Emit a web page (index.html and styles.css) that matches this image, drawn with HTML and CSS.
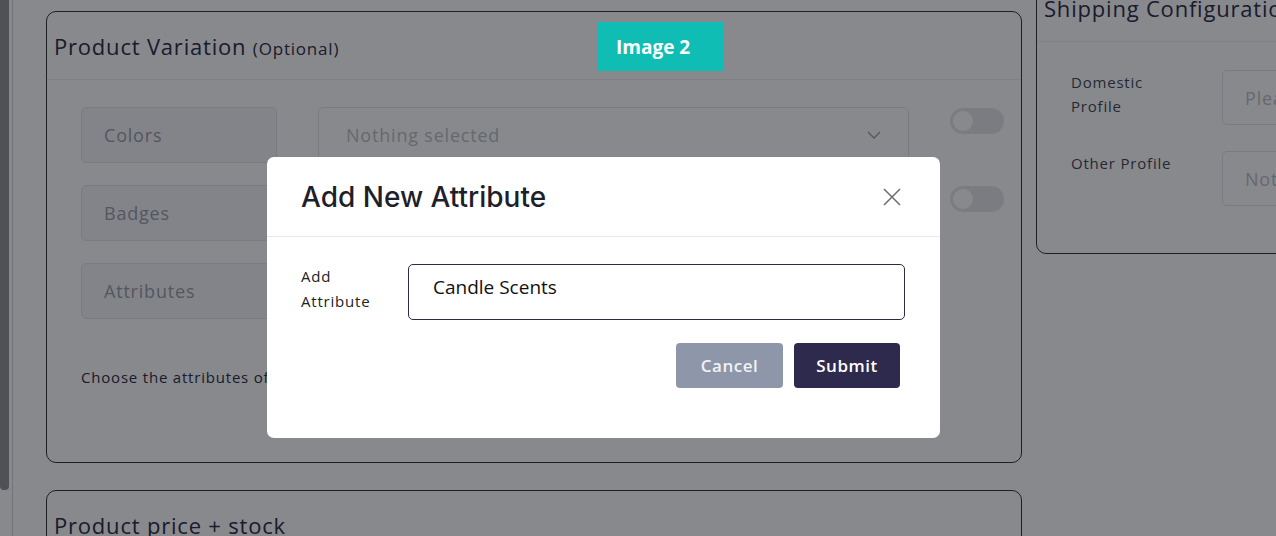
FILE: index.html
```html
<!DOCTYPE html>
<html lang="en">
<head>
  <meta charset="UTF-8">
  <meta name="viewport" content="width=device-width, initial-scale=1.0">
  <title>Add product</title>
  <link rel="stylesheet" href="styles.css">
</head>
<body>
  <div class="rail">
    <div class="thumb"></div>
  </div>

  <div class="page">
    <div class="main">
      <section class="card">
        <div class="card-head">
          <h2>Product Variation <small>(Optional)</small></h2>
        </div>
        <div class="card-body">
          <div class="attr-row">
            <div class="attr-name">Colors</div>
            <div class="attr-select">
              <span>Nothing selected</span>
              <svg width="14" height="8" viewBox="0 0 14 8"><path d="M1 1l6 6 6-6" fill="none" stroke="#9a9ca3" stroke-width="1.4"/></svg>
            </div>
            <span class="toggle"></span>
          </div>
          <div class="attr-row">
            <div class="attr-name">Badges</div>
            <div class="attr-select">
              <span>Nothing selected</span>
              <svg width="14" height="8" viewBox="0 0 14 8"><path d="M1 1l6 6 6-6" fill="none" stroke="#9a9ca3" stroke-width="1.4"/></svg>
            </div>
            <span class="toggle"></span>
          </div>
          <div class="attr-row">
            <div class="attr-name">Attributes</div>
            <div class="attr-select">
              <span>Nothing selected</span>
            </div>
          </div>
          <p class="hint">Choose the attributes of this product and then input values</p>
        </div>
      </section>

      <section class="card price">
        <div class="card-head">
          <h2>Product price + stock</h2>
        </div>
      </section>
    </div>

    <aside class="side">
      <section class="card">
        <div class="card-head">
          <h2>Shipping Configuration</h2>
        </div>
        <div class="card-body ship-body">
          <div class="ship-row">
            <label>Domestic Profile</label>
            <div class="ship-select">Please select</div>
          </div>
          <div class="ship-row">
            <label>Other Profile</label>
            <div class="ship-select">Nothing selected</div>
          </div>
        </div>
      </section>
    </aside>
  </div>

  <div class="backdrop"></div>

  <div class="modal">
    <div class="modal-head">
      <h3>Add New Attribute</h3>
      <svg class="close" width="18" height="18" viewBox="0 0 18 18"><path d="M1 1l16 16M17 1L1 17" stroke="#707070" stroke-width="1.6"/></svg>
    </div>
    <div class="modal-body">
      <div class="form-row">
        <label>Add Attribute</label>
        <div class="field">Candle Scents</div>
      </div>
      <div class="actions">
        <button class="btn cancel">Cancel</button>
        <button class="btn submit">Submit</button>
      </div>
    </div>
  </div>

  <div class="tag">Image 2</div>
</body>
</html>
```

FILE: styles.css
```css
*{
  margin: 0;
  padding: 0;
  box-sizing: border-box;
}
body{
  width: 1276px;
  height: 536px;
  overflow: hidden;
  display: flex;
  background: #fff;
  font-family: "Open Sans", sans-serif;
  letter-spacing: 0.05em;
  color: #2b2938;
}
.rail{
  width: 13px;
  flex: none;
  border-right: 1px solid #cfd5dc;
}
.thumb{
  width: 9px;
  height: 490px;
  background: #8c8e92;
  border-radius: 0 0 4px 4px;
}
.page{
  display: flex;
  gap: 14px;
  margin-top: -27px;
  padding-left: 33px;
}
.main{
  width: 976px;
  flex: none;
  padding-top: 38px;
}
.side{
  width: 320px;
  flex: none;
}
.card{
  border: 1px solid #2b2b2e;
  border-radius: 10px;
  background: #fff;
}
.card-head{
  height: 68px;
  padding-left: 7px;
  display: flex;
  align-items: center;
  border-bottom: 1px solid #eceef2;
}
.card-head h2{
  font-size: 22px;
  font-weight: 500;
  color: #25233a;
  white-space: nowrap;
}
.card-head small{
  font-size: 17px;
  font-weight: 400;
}
.card-body{
  padding: 27px 17px 73px 34px;
}
.attr-row{
  display: flex;
  align-items: flex-start;
  margin-bottom: 22px;
}
.attr-name{
  flex: none;
  width: 196px;
  height: 56px;
  padding-left: 22px;
  display: flex;
  align-items: center;
  background: #f4f5f7;
  border: 1px solid #e1e3e8;
  border-radius: 5px;
  font-size: 18px;
  color: #959aa2;
}
.attr-select{
  flex: none;
  width: 591px;
  height: 56px;
  margin-left: 41px;
  padding: 0 27px;
  display: flex;
  align-items: center;
  justify-content: space-between;
  border: 1px solid #e1e3e8;
  border-radius: 5px;
  font-size: 18px;
  color: #b9bcc2;
}
.toggle{
  flex: none;
  width: 54px;
  height: 26px;
  margin: 1px 0 0 41px;
  border-radius: 13px;
  background: #e3e4e8;
  position: relative;
}
.toggle::after{
  content: "";
  position: absolute;
  left: 3px;
  top: 3px;
  width: 20px;
  height: 20px;
  border-radius: 50%;
  background: #fff;
}
.hint{
  margin-top: 46px;
  font-size: 15px;
  line-height: 24px;
  color: #25233a;
}
.price{
  margin-top: 27px;
}
.ship-body{
  padding: 28px 34px 47px;
}
.ship-row{
  display: flex;
  align-items: flex-start;
}
.ship-row + .ship-row{
  margin-top: 26px;
}
.ship-row label{
  flex: none;
  width: 151px;
  padding-right: 25px;
  font-size: 15px;
  line-height: 24px;
  color: #3a3c48;
}
.ship-select{
  flex: none;
  width: 200px;
  height: 55px;
  padding-left: 22px;
  display: flex;
  align-items: center;
  border: 1px solid #e1e3e8;
  border-radius: 5px;
  font-size: 18px;
  color: #b9bcc2;
  white-space: nowrap;
}
.backdrop{
  position: fixed;
  inset: 0;
  background: rgba(17, 19, 28, 0.5);
}
.modal{
  position: fixed;
  left: 267px;
  top: 157px;
  width: 673px;
  height: 281px;
  background: #fff;
  border-radius: 7px;
}
.modal-head{
  height: 80px;
  padding: 0 39px 0 34px;
  display: flex;
  align-items: center;
  justify-content: space-between;
  border-bottom: 1px solid #e8e9f0;
}
.modal-head h3{
  font-family: Inter, sans-serif;
  font-size: 28px;
  font-weight: 500;
  letter-spacing: 0;
  color: #1f1f2b;
}
.modal-body{
  padding: 27px 35px 0 34px;
}
.form-row{
  display: flex;
  align-items: flex-start;
}
.form-row label{
  flex: none;
  width: 107px;
  padding-right: 25px;
  font-size: 15px;
  line-height: 25px;
  color: #222;
}
.field{
  flex: 1;
  height: 56px;
  padding: 9px 24px;
  border: 1px solid #2d2a4a;
  border-radius: 5px;
  font-size: 19px;
  letter-spacing: 0;
  color: #111;
}
.actions{
  display: flex;
  justify-content: flex-end;
  gap: 11px;
  margin-top: 23px;
  padding-right: 5px;
}
.btn{
  height: 45px;
  border: none;
  border-radius: 4px;
  font-family: "Open Sans", sans-serif;
  font-size: 17px;
  font-weight: 600;
  letter-spacing: 0.03em;
  color: #fff;
}
.cancel{
  width: 107px;
  background: #8e97a9;
  color: #f1f2f5;
}
.submit{
  width: 106px;
  background: #2e2a4e;
}
.tag{
  position: fixed;
  left: 598px;
  top: 22px;
  width: 125px;
  height: 49px;
  padding-left: 18px;
  display: flex;
  align-items: center;
  background: #0fbdb4;
  color: #fff;
  font-size: 19px;
  font-weight: 700;
  letter-spacing: 0;
}
```
